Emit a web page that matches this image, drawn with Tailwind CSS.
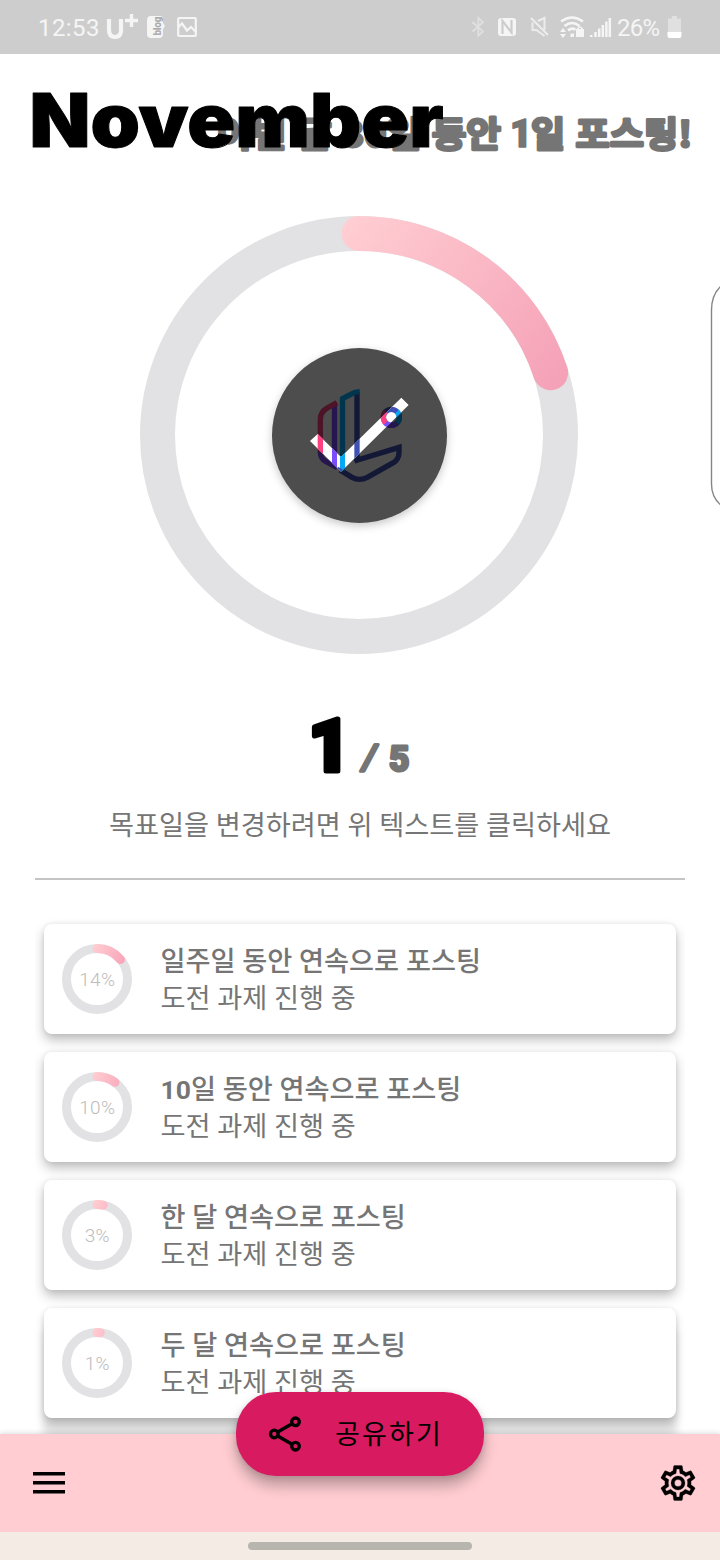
<!DOCTYPE html>
<html lang="ko">
<head>
<meta charset="utf-8">
<meta name="viewport" content="width=device-width, initial-scale=1">
<title>November</title>
<script src="https://cdn.jsdelivr.net/npm/@tailwindcss/browser@4"></script>
</head>
<body class="bg-white">
<div class="relative flex h-[1560px] w-[720px] flex-col overflow-hidden bg-white font-['Roboto','Noto_Sans_CJK_KR',sans-serif] text-[#757575]">

  <!-- Status bar -->
  <header class="flex h-[54px] shrink-0 items-center bg-[#cdcdcd] pr-[38px] pl-[38px] text-[24px] leading-none text-[#f5f5f5]">
    <span class="w-[68px] pt-[2px] tracking-[0.4px]">12:53</span>
    <svg class="h-[54px] w-[34px]" viewBox="0 0 34 54" fill="none" stroke="#f5f5f5"><path d="M3 19v11q0 7 6 7t6-7V19" stroke-width="4.2"/><path d="M25.500 14v13M19 20.500h13" stroke-width="3.400"/></svg>
    <svg class="ml-[6px] h-[54px] w-[20px]" viewBox="0 0 20 54"><path d="M5 16h9q3 0 3 3v4l2 3-2 3v5q0 4-4 4H5q-4 0-4-4V20q0-4 4-4z" fill="#f5f5f5"/><text transform="translate(14.500 35.500) rotate(-90)" font-size="10" font-weight="900" fill="#adadad" textLength="19">blog</text></svg>
    <svg class="ml-[10px] h-[54px] w-[22px]" viewBox="0 0 22 54" fill="none" stroke="#f5f5f5" stroke-width="2.200"><rect x="2.200" y="18" width="17.600" height="18" rx="1"/><path d="M2 27.500l4-4 5 7 4-3.500 5 5"/></svg>
    <span class="flex-1"></span>
    <svg class="h-[54px] w-[145px]" viewBox="470 0 145 54" fill="none" stroke="#f5f5f5" stroke-width="2">
      <path d="M472.500 22l10.500 9.500-4.700 4.200V18l4.700 4.200-10.500 9.500" stroke="#e0e0e0" stroke-width="1.700"/>
      <rect x="498" y="18" width="18" height="18" rx="3" fill="#f5f5f5" stroke="none"/>
      <path d="M502.500 34V21l9 11.500V20" stroke="#cdcdcd" stroke-width="2.200"/>
      <path d="M531 18l17 17M532.500 22.500v7.500h4l8 6M538 21l6.500-3v12" stroke="#ececec" stroke-width="2.100"/>
      <path d="M561 21.500q11-8 22 0M564.500 26q7.500-6 15 0M568 30.500q4-3.400 7.500-.8" stroke-width="2.600"/>
      <path d="M560 32l3-4 3 4zM560 34l3 4 3-4zM570.500 33.500h3.500v3.500h-3.500zM576 29h8v8h-8z" fill="#f5f5f5" stroke="none"/><path d="M578 30v-1.500q2-3 4 0V30" stroke-width="1.600"/>
      <path d="M591.200 35v2M595.500 32v5M599.200 28.500v8.500M602.800 25v12M606.400 21.500v15.500M609.800 18v19" stroke-width="2.500"/>
    </svg>
    <span class="ml-[2px] w-[49px] pt-[2px] tracking-[-0.8px]">26%</span>
    <svg class="ml-[1px] h-[54px] w-[15px]" viewBox="0 0 15 54"><path d="M1 18.500h4V16h5v2.500h4V32H1z" fill="#e0e0e0"/><path d="M.5 32h14v4q0 2-2 2h-10q-2 0-2-2z" fill="#fff"/></svg>
  </header>

  <main class="flex h-[1380px] shrink-0 flex-col items-center overflow-hidden">
    <!-- Month and goal -->
    <svg class="h-[130px] w-[720px] shrink-0" viewBox="0 54 720 130" stroke-linejoin="round">
      <g font-family="'Noto Sans CJK KR', sans-serif" font-weight="700" font-size="35" fill="#757575" stroke="#757575" stroke-width="2.800">
        <text x="217" y="146.500" textLength="284" lengthAdjust="spacingAndGlyphs">이번 달 30일 동안</text>
        <text x="510" y="147" font-family="Roboto, sans-serif" font-weight="900" font-size="38" stroke-width="1.600">1</text>
        <text x="531" y="146.500" textLength="161" lengthAdjust="spacingAndGlyphs">일 포스팅!</text>
      </g>
      <text x="29.500" y="147" font-family="Inter, sans-serif" font-weight="900" font-size="74" fill="#000" stroke="#000" stroke-width="1" textLength="414" lengthAdjust="spacingAndGlyphs">November</text>
    </svg>

    <!-- Monthly progress -->
    <svg class="h-[516px] w-[720px] shrink-0" viewBox="0 184 720 516" fill="none">
      <defs>
        <linearGradient id="arc" gradientUnits="userSpaceOnUse" x1="350" y1="225" x2="560" y2="385"><stop stop-color="#ffcdd2"/><stop offset="1" stop-color="#f5a1b7"/></linearGradient>
        <filter id="drop" x="-20%" y="-20%" width="140%" height="140%"><feDropShadow dx="0" dy="3" stdDeviation="4.500" flood-opacity=".22"/></filter>
        <clipPath id="tick"><path d="M150 318l23-21 70 69L424 188l22 22L243 410z"/></clipPath>
      </defs>
      <circle cx="359" cy="435" r="201.500" stroke="#e2e2e4" stroke-width="35"/>
      <path d="M359 233.500A201.500 201.500 0 0 1 550.640 372.730" stroke="url(#arc)" stroke-width="35" stroke-linecap="round"/>
      <circle cx="359.500" cy="435.500" r="87.500" fill="#4d4d4d" filter="url(#drop)"/>
      <g transform="translate(260 335) scale(.33333)">
        <g stroke-width="16">
          <path d="M181 350Q181 371 198 380L232 398M223.500 210V395" stroke="#25174d"/>
          <path d="M231 203l-31 17Q181 231 181 255v97" stroke="#4d1327"/>
          <path d="M291 172V380M283 378L417 337V353Q417 372 400 383L322 427Q298 439 276 427L240 405" stroke="#131836"/>
          <path d="M247.500 408V191L272 178Q286 170 299 170" stroke="#00354d"/>
          <circle cx="394" cy="247" r="24" stroke="#131836"/>
          <path d="M377 230a24 24 0 0 0 0 34" stroke="#4d1327"/><path d="M377 264a24 24 0 0 0 34 0" stroke="#25174d"/><path d="M411 230a24 24 0 0 1 0 34" stroke="#00354d"/>
        </g>
        <path d="M150 318l23-21 70 69L424 188l22 22L243 410z" fill="#fff"/>
        <g clip-path="url(#tick)" stroke-width="16">
          <path d="M181 280v80" stroke="#ff4081"/>
          <path d="M223.500 280v130" stroke="#7c4dff" stroke-width="15"/>
          <path d="M247.500 300v110" stroke="#03a9f4" stroke-width="15"/>
          <path d="M291 300v90M230 402l20 12" stroke="#3f51b5"/>
          <circle cx="394" cy="247" r="24" stroke="#3f51b5"/>
          <path d="M377 230a24 24 0 0 0 0 34" stroke="#ff4081"/><path d="M377 264a24 24 0 0 0 34 0" stroke="#7c4dff"/><path d="M411 230a24 24 0 0 1 0 34" stroke="#03a9f4"/>
        </g>
      </g>
    </svg>

    <!-- Count -->
    <svg class="h-[100px] w-[720px] shrink-0" viewBox="0 700 720 100" fill="none" stroke-linejoin="round" font-family="Roboto, sans-serif" font-weight="900">
      <text x="308.500" y="770.500" font-size="72" fill="#000" stroke="#000" stroke-width="5">1</text>
      <text transform="translate(361 769) skewX(-10)" font-size="34" font-weight="500" fill="#757575" stroke="#757575" stroke-width="3.500">/</text>
      <text x="389" y="771" font-size="35" font-weight="700" fill="#757575" stroke="#757575" stroke-width="3.200">5</text>
    </svg>
    <p class="h-[78px] shrink-0 pt-[6px] text-[27.2px] leading-[40px] whitespace-nowrap">목표일을 변경하려면 위 텍스트를 클릭하세요</p>
    <div class="h-[2px] w-[650px] shrink-0 bg-[#c4c4c4]"></div>

    <!-- Challenges -->
    <ul class="flex w-[650px] flex-1 flex-col gap-[18px] overflow-hidden px-[9px] pt-[44px]">
      <li class="flex h-[110px] shrink-0 items-center rounded-[8px] bg-white pl-[18px] shadow-[0_6px_12px_rgba(0,0,0,0.26),0_0_5px_rgba(0,0,0,0.08)]">
        <svg class="size-[70px]" viewBox="0 0 70 70" fill="none" stroke-width="9"><defs><linearGradient id="g" gradientUnits="userSpaceOnUse" x1="30" y1="5" x2="64" y2="20"><stop stop-color="#ffcdd2"/><stop offset="1" stop-color="#f8a2b7"/></linearGradient></defs><circle cx="35" cy="35" r="30.500" stroke="#e2e2e4"/><path d="M35 4.500A30.500 30.500 0 0 1 58.500 15.560" stroke="url(#g)" stroke-linecap="round"/><text x="35.300" y="42" text-anchor="middle" font-size="19" letter-spacing=".3" font-weight="300" fill="#bcbcbc">14%</text></svg>
        <div class="ml-[28.500px] pt-[2px] text-[27.200px] leading-[38px]"><h2 class="font-medium">일주일 동안 연속으로 포스팅</h2><p class="-mt-px">도전 과제 진행 중</p></div>
      </li>
      <li class="flex h-[110px] shrink-0 items-center rounded-[8px] bg-white pl-[18px] shadow-[0_6px_12px_rgba(0,0,0,0.26),0_0_5px_rgba(0,0,0,0.08)]">
        <svg class="size-[70px]" viewBox="0 0 70 70" fill="none" stroke-width="9"><circle cx="35" cy="35" r="30.500" stroke="#e2e2e4"/><path d="M35 4.500A30.500 30.500 0 0 1 52.930 10.320" stroke="url(#g)" stroke-linecap="round"/><text x="35.300" y="42" text-anchor="middle" font-size="19" letter-spacing=".3" font-weight="300" fill="#bcbcbc">10%</text></svg>
        <div class="ml-[28.500px] pt-[2px] text-[27.200px] leading-[38px]"><h2 class="font-medium"><span class="text-[26.500px] font-bold">10</span>일 동안 연속으로 포스팅</h2><p class="-mt-px">도전 과제 진행 중</p></div>
      </li>
      <li class="flex h-[110px] shrink-0 items-center rounded-[8px] bg-white pl-[18px] shadow-[0_6px_12px_rgba(0,0,0,0.26),0_0_5px_rgba(0,0,0,0.08)]">
        <svg class="size-[70px]" viewBox="0 0 70 70" fill="none" stroke-width="9"><circle cx="35" cy="35" r="30.500" stroke="#e2e2e4"/><path d="M35 4.500A30.500 30.500 0 0 1 41.200 5.140" stroke="url(#g)" stroke-linecap="round"/><text x="35.300" y="42" text-anchor="middle" font-size="19" letter-spacing=".3" font-weight="300" fill="#bcbcbc">3%</text></svg>
        <div class="ml-[28.500px] pt-[2px] text-[27.200px] leading-[38px]"><h2 class="font-medium">한 달 연속으로 포스팅</h2><p class="-mt-px">도전 과제 진행 중</p></div>
      </li>
      <li class="flex h-[110px] shrink-0 items-center rounded-[8px] bg-white pl-[18px] shadow-[0_6px_10px_rgba(0,0,0,0.2),0_22px_8px_1px_rgba(0,0,0,0.105),0_0_5px_rgba(0,0,0,0.08)]">
        <svg class="size-[70px]" viewBox="0 0 70 70" fill="none" stroke-width="9"><circle cx="35" cy="35" r="30.500" stroke="#e2e2e4"/><path d="M35 4.500A30.500 30.500 0 0 1 38.200 4.670" stroke="url(#g)" stroke-linecap="round"/><text x="35.300" y="42" text-anchor="middle" font-size="19" letter-spacing=".3" font-weight="300" fill="#bcbcbc">1%</text></svg>
        <div class="ml-[28.500px] pt-[2px] text-[27.200px] leading-[38px]"><h2 class="font-medium">두 달 연속으로 포스팅</h2><p class="-mt-px">도전 과제 진행 중</p></div>
      </li>
    </ul>
  </main>

  <!-- Bottom bar -->
  <nav class="relative flex h-[98px] shrink-0 items-center justify-between bg-[#ffcdd2] pr-[21px] pl-[33px] shadow-[0_-1px_5px_rgba(0,0,0,0.14)]">
    <svg class="h-[22px] w-[32px]" viewBox="0 0 32 22"><path d="M0 0h32v3.600H0zM0 9h32v3.600H0zM0 18h32v3.600H0z"/></svg>
    <button class="absolute top-[-42px] left-[236px] flex h-[84px] w-[248px] items-center rounded-[40px] bg-[#d81b60] pl-[32px] text-[27px] tracking-[2.200px] text-black shadow-[0_10px_14px_rgba(0,0,0,0.26),0_1px_6px_rgba(0,0,0,0.12)]">
      <svg class="h-[36px] w-[34px]" viewBox="0 0 34 36" fill="none" stroke="#000" stroke-width="3.300"><path d="M6.300 18L27.500 5.800M6.300 18l21.200 12.200"/><g fill="#d81b60"><circle cx="6.300" cy="18" r="3.800"/><circle cx="27.500" cy="5.800" r="3.800"/><circle cx="27.500" cy="30.200" r="3.800"/></g></svg>
      <span class="ml-[33px] pt-[3px] font-normal whitespace-nowrap">공유하기</span>
    </button>
    <svg class="size-[42px]" viewBox="0 0 24 24" stroke="#000" stroke-width=".15"><path d="M12,8A4,4 0 0,1 16,12A4,4 0 0,1 12,16A4,4 0 0,1 8,12A4,4 0 0,1 12,8M12,10A2,2 0 0,0 10,12A2,2 0 0,0 12,14A2,2 0 0,0 14,12A2,2 0 0,0 12,10M10,22C9.75,22 9.54,21.82 9.5,21.58L9.13,18.93C8.5,18.68 7.96,18.34 7.44,17.94L4.95,18.95C4.73,19.03 4.46,18.95 4.34,18.73L2.34,15.27C2.21,15.05 2.27,14.78 2.46,14.63L4.57,12.97L4.5,12L4.57,11L2.46,9.37C2.27,9.22 2.21,8.95 2.34,8.73L4.34,5.27C4.46,5.05 4.73,4.96 4.95,5.05L7.44,6.05C7.96,5.66 8.5,5.32 9.13,5.07L9.5,2.42C9.54,2.18 9.75,2 10,2H14C14.25,2 14.46,2.18 14.5,2.42L14.87,5.07C15.5,5.32 16.04,5.66 16.56,6.05L19.05,5.05C19.27,4.96 19.54,5.05 19.66,5.27L21.66,8.73C21.79,8.95 21.73,9.22 21.54,9.37L19.43,11L19.5,12L19.43,13L21.54,14.63C21.73,14.78 21.79,15.05 21.66,15.27L19.66,18.73C19.54,18.95 19.27,19.04 19.05,18.95L16.56,17.95C16.04,18.34 15.5,18.68 14.87,18.93L14.5,21.58C14.46,21.82 14.25,22 14,22H10M11.25,4L10.88,6.61C9.68,6.86 8.62,7.5 7.85,8.39L5.44,7.35L4.69,8.65L6.8,10.2C6.4,11.37 6.4,12.64 6.8,13.8L4.68,15.36L5.43,16.66L7.86,15.62C8.63,16.5 9.68,17.14 10.87,17.38L11.24,20H12.76L13.13,17.39C14.32,17.14 15.37,16.5 16.14,15.62L18.57,16.66L19.32,15.36L17.2,13.81C17.6,12.64 17.6,11.37 17.2,10.2L19.31,8.65L18.56,7.35L16.15,8.39C15.38,7.5 14.32,6.86 13.12,6.62L12.75,4H11.25Z"/></svg>
  </nav>

  <!-- Gesture bar -->
  <footer class="relative flex h-[28px] shrink-0 items-center justify-center bg-[#f3ebe4]"><div class="h-[8px] w-[224px] rounded-full bg-[#b8b4ae]"></div></footer>

  <!-- Edge panel handle -->
  <svg class="absolute top-[270px] right-0 h-[250px] w-[12px]" viewBox="708 270 12 250" fill="#fff" stroke="#858585" stroke-width="1.400"><path d="M722 285Q711.500 294 711.500 310V484Q711.500 498 722 506"/></svg>
</div>
</body>
</html>
